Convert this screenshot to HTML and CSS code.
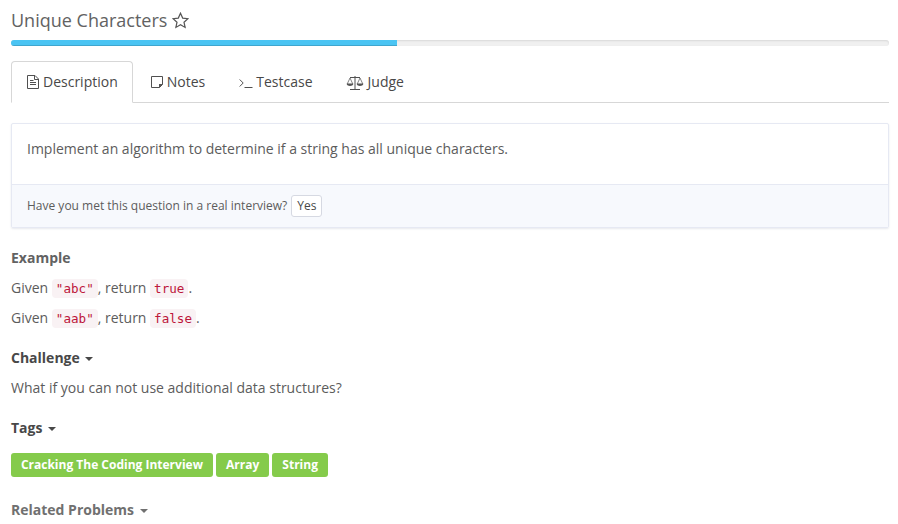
FILE: index.html
```html
<!DOCTYPE html>
<html lang="en">
<head>
<meta charset="utf-8">
<title>Unique Characters</title>
<link rel="stylesheet" href="styles.css">
</head>
<body>
<h1 class="title"><span>Unique Characters</span><svg class="star" width="17" height="17" viewBox="0 0 17 17"><path d="M8.500 1.200l2.200 4.900 5.200.6-3.900 3.500 1.100 5.200-4.600-2.600-4.600 2.600L5 10.200 1.100 6.700l5.200-.6z"/></svg></h1>
<div class="progress"><div class="bar"></div></div>
<nav class="tabs">
<a class="tab active"><svg width="12" height="14" viewBox="0 0 12 14"><path d="M.5.5h7.500l3.500 3.500v9.500H.5zM7.500.5v4h4M3 5.500h3.500M3 7.500h6M3 9.500h6"/></svg>Description</a>
<a class="tab"><svg width="13" height="13" viewBox="0 0 13 13"><path d="M.5.5h11v8l-3 3H.5z"/><path class="fill" d="M8 12v-4h4z"/></svg>Notes</a>
<a class="tab"><svg width="14" height="13" viewBox="0 0 14 13"><path d="M.7 3.500l3.500 3.500-3.500 3.500M5.500 11.500h8"/></svg>Testcase</a>
<a class="tab judge"><svg width="18" height="15" viewBox="0 0 18 15"><path d="M4 2.500h10M9 1v13M4 14.500h10"/><path class="thin" d="M4 3L1.200 9h5.600L4 3M14 3l-2.800 6h5.600L14 3"/><path class="fill" d="M.6 8.800h6.800c-.5 3-6.300 3-6.800 0M10.600 8.800h6.800c-.5 3-6.300 3-6.800 0"/></svg>Judge</a>
</nav>
<section class="card">
<p class="question">Implement an algorithm to determine if a string has all unique characters.</p>
<div class="met"><span>Have you met this question in a real interview?</span><button>Yes</button></div>
</section>
<h2 class="muted">Example</h2>
<p>Given <code>"abc"</code>, return <code>true</code>.</p>
<p>Given <code>"aab"</code>, return <code>false</code>.</p>
<h2>Challenge <i class="caret"></i></h2>
<p>What if you can not use additional data structures?</p>
<h2>Tags <i class="caret"></i></h2>
<div class="tags"><span>Cracking The Coding Interview</span><span>Array</span><span>String</span></div>
<h2 class="muted related">Related Problems <i class="caret"></i></h2>
</body>
</html>
```
FILE: styles.css
```css
* { box-sizing: border-box; }
body { margin: 0; padding: 10px 9px 0 11px; height: 524px; overflow: hidden; background: #fff; color: #5c5c5c; font: 14px/20px "Open Sans", sans-serif; }
svg { flex: none; fill: none; stroke: #505050; stroke-width: 1; }
.fill { fill: #555; stroke: none; }
.thin { stroke-width: .7; }
.title { display: flex; align-items: center; gap: 5px; margin: 0 0 10px; color: #626262; font-size: 18px; line-height: 20px; font-weight: 400; }
.star { stroke: #555; stroke-width: 1.2; }
.progress { height: 6px; border-radius: 3px; background: #f0f0f0; box-shadow: inset 0 1px 2px rgba(0,0,0,.1); overflow: hidden; }
.bar { width: 386px; height: 6px; background: #4ac4f3; box-shadow: inset 0 -1px 0 rgba(0,0,0,.15); }
.tabs { display: flex; height: 42px; margin-top: 15px; border-bottom: 1px solid #d7d7d7; }
.tab { display: flex; align-items: center; gap: 3px; height: 42px; margin-right: 2px; padding: 0 15px; border: 1px solid transparent; border-radius: 4px 4px 0 0; color: #484848; }
.tab.active { gap: 4px; padding-right: 14px; border-color: #d7d7d7; border-bottom-color: #fff; background: #fff; }
.tab.judge { gap: 4px; padding-left: 14px; }
.card { height: 105px; margin: 20px 0; border: 1px solid #e6e9f3; border-radius: 2px; box-shadow: 0 1px 2px rgba(60,70,110,.12); }
.question { height: 60px; margin: 0; padding: 15px; }
.met { display: flex; align-items: center; gap: 4px; height: 43px; padding: 0 15px; background: #f7f9fd; border-top: 1px solid #e6e9f3; font-size: 12px; }
button { height: 22px; padding: 0 5px; border: 1px solid #d6d9e2; border-radius: 3px; background: #fff; color: #484848; font: 12px/18px "Open Sans", sans-serif; }
h2 { margin: 0 0 10px; font-size: 14px; line-height: 20px; font-weight: 700; color: #484848; }
h2.muted { color: #626262; }
h2.related { color: #707070; }
p { margin: 0 0 10px; }
p + h2 { margin-top: 20px; }
code { padding: 2px 4px; border-radius: 4px; background: #f9f2f4; color: #bd173b; font: 12.6px/18px "DejaVu Sans Mono", monospace; }
.caret { display: inline-block; margin-left: 2px; vertical-align: middle; border-top: 4px solid; border-left: 4px solid transparent; border-right: 4px solid transparent; }
.tags { display: flex; gap: 3.3px; margin: 15px 0 23px; }
.tags span { height: 24px; padding: 0 9.900px; border-radius: 3px; background: #85cb4b; color: #fff; font-size: 12px; line-height: 24px; font-weight: 700; }
```
